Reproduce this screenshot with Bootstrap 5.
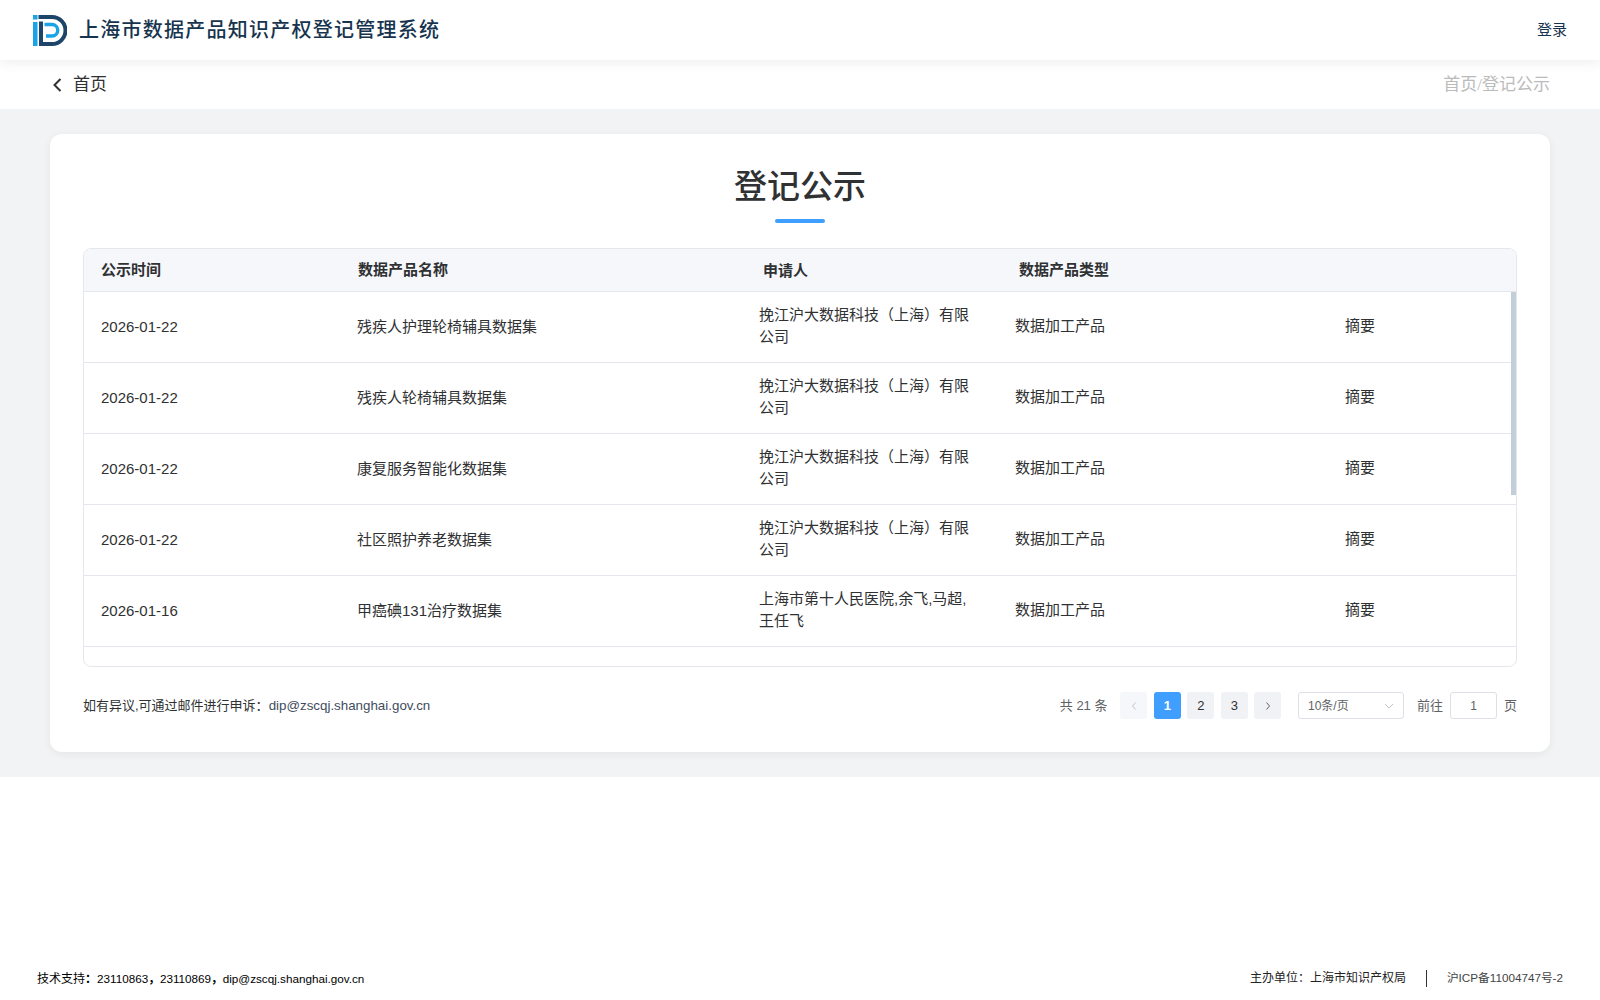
<!DOCTYPE html>
<html lang="zh-CN">
<head>
    <meta charset="UTF-8" />
    <meta name="viewport" content="width=device-width, initial-scale=1.0"/>
    <title>上海市数据产品知识产权登记管理系统</title>
    <link href="https://cdn.jsdelivr.net/npm/bootstrap@5.3.2/dist/css/bootstrap.min.css" rel="stylesheet">
    <style>
        html, body { height: 100%; }
        body {
          font-family: "Liberation Sans", "Noto Sans CJK SC", sans-serif;
          font-size: 15px;
          color: #303133;
          background: #fff;
          min-height: 1000px;
        }
        .top-bar { height: 60px; padding: 0 33px; box-shadow: 0 2px 12px rgba(0,0,0,.08); position: relative; }
        .site-name { font-size: 20px; font-weight: 500; color: #17344f; letter-spacing: 1.25px; margin-left: 12px; }
        .login-link { font-size: 15px; color: #17344f; }
        .crumb-bar { height: 49px; padding: 0 50px 0 51px; }
        .back-link { font-size: 17px; color: #303133; gap: 10px; }
        .crumb-path { font-size: 17px; color: #bbb; font-family: "Liberation Serif", "Noto Sans CJK SC", serif; }
        .page-bg { background: #f2f3f5; padding: 25px 50px; height: 668px; }
        .main-panel { background: #fff; border-radius: 12px; box-shadow: 0 2px 8px rgba(0,0,0,.06); padding: 33px 33px 0 33px; height: 618px; }
        .panel-title { font-size: 33px; font-weight: 500; color: #303133; line-height: 40px; margin: 0; }
        .title-bar { width: 50px; height: 4px; border-radius: 2px; background: #409eff; margin: 12px auto 25px; }
        .data-box { border: 1px solid #e4e7ed; border-radius: 8px; height: 419px; position: relative; overflow: hidden; }
        .data-head { height: 43px; padding-top: 1px; background: #f5f7fa; border-bottom: 1px solid #e4e7ed; font-weight: 700; color: #303133; }
        .data-row { height: 71px; border-bottom: 1px solid #e4e7ed; }
        .col-time { width: 257px; padding-left: 17px; flex: none; }
        .col-name { width: 401px; padding-left: 16px; flex: none; }
        .col-owner { width: 256px; padding-left: 17px; padding-right: 26px; padding-bottom: 2px; flex: none; line-height: 22px; }
        .col-type { width: 347px; padding-left: 17px; padding-bottom: 2px; flex: none; }
        .col-action { padding-bottom: 2px; }
        .data-head .col-name { padding-left: 17px; }
        .data-head .col-owner { padding-left: 21px; padding-bottom: 0; }
        .data-head .col-type { padding-left: 21px; padding-bottom: 0; }
        .scroll-thumb { position: absolute; right: 0; top: 43px; width: 5px; height: 203px; background: #c3ced9; }
        .foot-row { height: 76px; padding-top: 1px; font-size: 13px; }
        .appeal-text { padding-top: 2px; }
        .mail-text { color: #3e4c5e; font-size: 13.35px; }
        .pager-box { font-size: 13px; color: #606266; }
        .total-text { margin-right: 13px; }
        .page-btn { width: 27px; height: 27px; border-radius: 3px; background: #f0f2f5; color: #303133; font-size: 13px; margin-right: 6.5px; }
        .page-btn.is-on { background: #409eff; color: #fff; font-weight: 700; }
        .page-btn.is-off { background: #f5f7fa; color: #c0c4cc; }
        .size-pick { width: 106px; height: 27px; border: 1px solid #dcdfe6; border-radius: 3px; padding: 0 9px; font-size: 12px; margin: 0 13px 0 10px; }
        .jump-input { width: 47px; height: 27px; border: 1px solid #dcdfe6; border-radius: 3px; font-size: 12px; margin: 0 7px; }
        .site-foot { position: absolute; left: 0; right: 0; top: 963px; height: 30px; padding: 0 37px; font-size: 12px; color: #222; }
        .foot-left { color: #000; padding-top: 2px; font-size: 11.7px; }
        .foot-label { font-size: 12px; }
        .foot-mark { font-weight: 700; }
        .foot-sep { width: 1px; height: 17px; background: #333; margin: 0 20px; }
        .icp-text { color: #444; font-size: 11.7px; }
    </style>
</head>
<body>

<header class="top-bar d-flex align-items-center justify-content-between bg-white">
    <div class="d-flex align-items-center">
        <svg width="34" height="31" viewBox="0 0 34 31">
            <rect x="0" y="0" width="4.5" height="4.5" fill="#1ba3e8"/>
            <rect x="0" y="7" width="4.5" height="24" fill="#1ba3e8"/>
            <path d="M5.5 2H19a13.5 13.5 0 0 1 0 27H8V6.5" fill="none" stroke="#1d4469" stroke-width="4"/>
            <path d="M11.5 9.5H19a5.75 5.75 0 0 1 0 11.5h-6" fill="none" stroke="#1ba3e8" stroke-width="3.4"/>
        </svg>
        <span class="site-name">上海市数据产品知识产权登记管理系统</span>
    </div>
    <span class="login-link">登录</span>
</header>

<div class="crumb-bar d-flex align-items-center justify-content-between">
    <span class="back-link d-flex align-items-center">
        <svg width="12" height="16" viewBox="0 0 12 16"><path d="M9.5 2 3.5 8l6 6" fill="none" stroke="#303133" stroke-width="2"/></svg>
        首页
    </span>
    <span class="crumb-path">首页/登记公示</span>
</div>

<main class="page-bg">
    <div class="main-panel">
        <h1 class="panel-title text-center">登记公示</h1>
        <div class="title-bar"></div>

        <div class="data-box">
            <div class="data-head d-flex align-items-center">
                <div class="col-time">公示时间</div>
                <div class="col-name">数据产品名称</div>
                <div class="col-owner">申请人</div>
                <div class="col-type">数据产品类型</div>
            </div>
            <div id="tableRows"></div>
            <div class="scroll-thumb"></div>
        </div>

        <div class="foot-row d-flex align-items-center justify-content-between">
            <div class="appeal-text">如有异议,可通过邮件进行申诉：<span class="mail-text">dip@zscqj.shanghai.gov.cn</span></div>
            <div class="pager-box d-flex align-items-center">
                <span class="total-text">共 21 条</span>
                <span class="page-btn is-off d-flex align-items-center justify-content-center">
                    <svg width="8" height="10" viewBox="0 0 8 10"><path d="M5.5 1.5 2.5 5l3 3.5" fill="none" stroke="currentColor"/></svg>
                </span>
                <span class="page-btn is-on d-flex align-items-center justify-content-center">1</span>
                <span class="page-btn d-flex align-items-center justify-content-center">2</span>
                <span class="page-btn d-flex align-items-center justify-content-center">3</span>
                <span class="page-btn d-flex align-items-center justify-content-center">
                    <svg width="8" height="10" viewBox="0 0 8 10"><path d="M2.5 1.5 5.5 5l-3 3.5" fill="none" stroke="#606266"/></svg>
                </span>
                <span class="size-pick d-flex align-items-center justify-content-between">10条/页
                    <svg width="10" height="6" viewBox="0 0 10 6"><path d="M1 1l4 4 4-4" fill="none" stroke="#c0c4cc"/></svg>
                </span>
                <span>前往</span>
                <span class="jump-input d-flex align-items-center justify-content-center">1</span>
                <span>页</span>
            </div>
        </div>
    </div>
</main>

<footer class="site-foot d-flex align-items-center justify-content-between">
    <div class="foot-left"><span class="foot-label">技术支持<span class="foot-mark">：</span></span>23110863<span class="foot-mark">，</span>23110869<span class="foot-mark">，</span>dip@zscqj.shanghai.gov.cn</div>
    <div class="d-flex align-items-center">
        <span>主办单位：上海市知识产权局</span>
        <span class="foot-sep"></span>
        <span class="icp-text">沪ICP备11004747号-2</span>
    </div>
</footer>

<script>
    const rows = [
      ['2026-01-22', '残疾人护理轮椅辅具数据集', '挽江沪大数据科技（上海）有限公司'],
      ['2026-01-22', '残疾人轮椅辅具数据集', '挽江沪大数据科技（上海）有限公司'],
      ['2026-01-22', '康复服务智能化数据集', '挽江沪大数据科技（上海）有限公司'],
      ['2026-01-22', '社区照护养老数据集', '挽江沪大数据科技（上海）有限公司'],
      ['2026-01-16', '甲癌碘131治疗数据集', '上海市第十人民医院,余飞,马超,王任飞']
    ];
    document.getElementById('tableRows').innerHTML = rows.map(r => `
      <div class="data-row d-flex align-items-center">
        <div class="col-time">${r[0]}</div>
        <div class="col-name">${r[1]}</div>
        <div class="col-owner">${r[2]}</div>
        <div class="col-type">数据加工产品</div>
        <div class="col-action">摘要</div>
      </div>`).join('');
</script>
<script src="https://cdn.jsdelivr.net/npm/bootstrap@5.3.2/dist/js/bootstrap.bundle.min.js"></script>
</body>
</html>
